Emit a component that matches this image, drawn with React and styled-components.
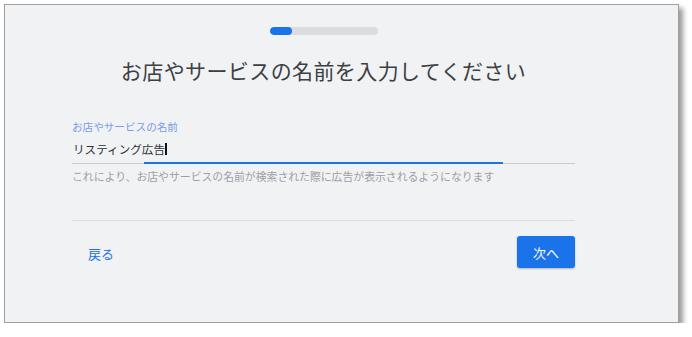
import React from "react";
import styled, { createGlobalStyle } from "styled-components";

const GlobalStyle = createGlobalStyle`
  html, body {
    margin: 0;
    padding: 0;
    background: #ffffff;
  }
  body {
    font-family: "Noto Sans CJK JP", "Noto Sans", Roboto, sans-serif;
  }
`;

// outer window with its drop shadow
const Frame = styled.div`
  box-sizing: border-box;
  margin: 4px 0 0 4px;
  width: 675px;
  height: 319px;
  border: 1px solid #a0a0a0;
  background: #f1f2f4;
  box-shadow: 4px 4px 5px rgba(0, 0, 0, 0.4);
`;

const Content = styled.div`
  width: 503px;
  margin-left: 67px;
  padding-top: 22px;
  display: flex;
  flex-direction: column;
`;

const Progress = styled.div`
  align-self: center;
  width: 108px;
  height: 8px;
  border-radius: 4px;
  background: #dadce0;
  overflow: hidden;
`;

const ProgressFill = styled.div`
  height: 100%;
  border-radius: 4px;
  background: #1a73e8;
`;

const Title = styled.h1`
  margin: 20px 0 0;
  font-size: 21px;
  line-height: 30px;
  font-weight: 400;
  color: #3c4043;
  text-align: center;
  letter-spacing: 0.4px;
`;

const Field = styled.div`
  margin-top: 35px;
  display: flex;
  flex-direction: column;
`;

const Label = styled.label`
  font-size: 10.6px;
  line-height: 14px;
  color: #7b9de8;
`;

const InputBox = styled.div`
  position: relative;
  margin-top: 6px;
  padding: 0 1px 5px;
  border-bottom: 1px solid #c8cacd;
  display: flex;
  align-items: center;
`;

const InputText = styled.span`
  font-size: 11.6px;
  line-height: 18px;
  color: #2f3134;
`;

const Caret = styled.span`
  width: 2px;
  height: 12px;
  background: #111;
`;

const FocusLine = styled.div`
  position: absolute;
  left: ${(p) => p.$left}px;
  width: ${(p) => p.$width}px;
  bottom: -1px;
  height: 2px;
  background: #1a73e8;
`;

const Helper = styled.div`
  margin-top: 5px;
  font-size: 10.85px;
  line-height: 14px;
  color: #9aa0a6;
`;

const Divider = styled.hr`
  margin: 37px 0 0;
  border: 0;
  height: 1px;
  background: #dadce0;
`;

const Footer = styled.div`
  margin-top: 15px;
  display: flex;
  justify-content: space-between;
  align-items: center;
`;

const BackLink = styled.a`
  margin: 3px 0 0 16px;
  font-size: 13px;
  line-height: 18px;
  color: #1a73e8;
  text-decoration: none;
  cursor: pointer;
`;

const NextButton = styled.button`
  width: 58px;
  height: 32px;
  border: 0;
  border-radius: 3px;
  background: #1a73e8;
  color: #fff;
  font-family: inherit;
  font-size: 13px;
  box-shadow: 0 1px 2px rgba(60, 64, 67, 0.35);
  cursor: pointer;
`;

export default function App() {
  const step = { done: 22, total: 108 };
  return (
    <>
      <GlobalStyle />
      <Frame>
        <Content>
          <Progress>
            <ProgressFill style={{ width: `${step.done}px` }} />
          </Progress>
          <Title>お店やサービスの名前を入力してください</Title>
          <Field>
            <Label>お店やサービスの名前</Label>
            <InputBox>
              <InputText>リスティング広告</InputText>
              <Caret />
              <FocusLine $left={72} $width={359} />
            </InputBox>
            <Helper>
              これにより、お店やサービスの名前が検索された際に広告が表示されるようになります
            </Helper>
          </Field>
          <Divider />
          <Footer>
            <BackLink>戻る</BackLink>
            <NextButton>次へ</NextButton>
          </Footer>
        </Content>
      </Frame>
    </>
  );
}
